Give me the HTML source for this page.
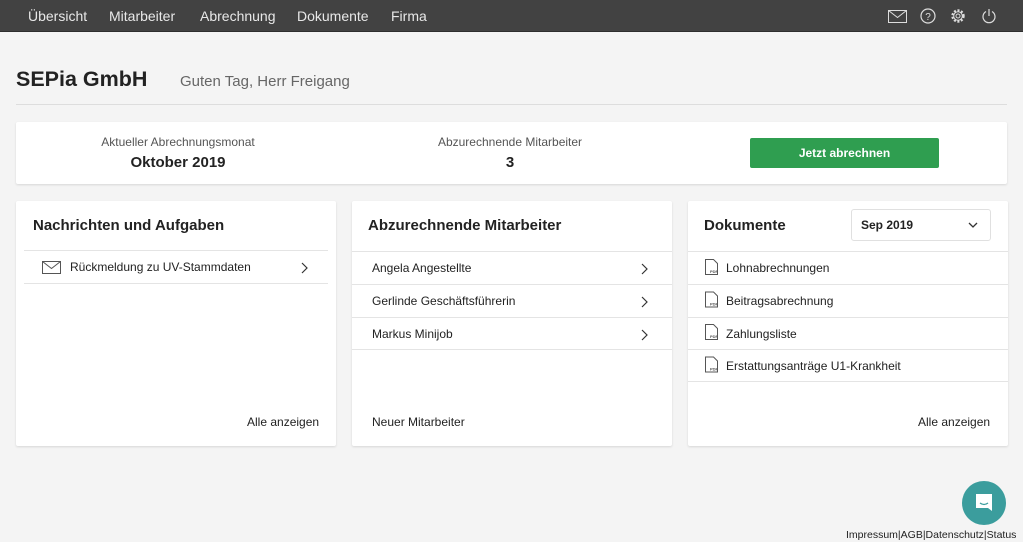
<!DOCTYPE html>
<html><head><meta charset="utf-8"><style>
*{box-sizing:border-box;margin:0;padding:0}
body{width:1023px;height:542px;background:#f4f4f4;font-family:"Liberation Sans",sans-serif;color:#222;position:relative;overflow:hidden}
.nav{position:absolute;left:0;top:0;width:1023px;height:32px;background:#424242;border-bottom:1px solid #2e2e2e}
.nav span{position:absolute;top:8px;color:#e8e8e8;font-size:14px}
.ic{position:absolute;top:8px}
.h1{position:absolute;left:16px;top:67px;font-size:21.5px;font-weight:bold;color:#222}
.greet{position:absolute;left:180px;top:73px;font-size:15px;color:#666}
.hr{position:absolute;left:16px;top:104px;width:991px;height:1px;background:#ddd}
.card{position:absolute;background:#fff;box-shadow:0 1px 2px rgba(0,0,0,.12);border-radius:2px}
.lbl{position:absolute;font-size:12px;color:#555;text-align:center}
.val{position:absolute;font-size:15px;font-weight:bold;text-align:center}
.btn{position:absolute;left:750px;top:138px;width:189px;height:30px;background:#2f9e50;border-radius:2px;color:#fff;font-size:12px;font-weight:bold;text-align:center;line-height:30px}
.t{position:absolute;top:217px;font-size:15px;font-weight:bold;color:#222}
.row{position:absolute;height:33px;border-top:1px solid #e4e4e4;font-size:12px;line-height:32px;color:#222}
.ch{position:absolute;right:24px;top:11px}
.foot{position:absolute;top:415px;font-size:12px;color:#222}
svg{display:block}
</style></head><body>
<div class="nav">
<span style="left:28px">Übersicht</span><span style="left:109px">Mitarbeiter</span><span style="left:200px">Abrechnung</span><span style="left:297px">Dokumente</span><span style="left:391px">Firma</span>
<svg class="ic" style="left:888px;top:10px" width="19" height="13" viewBox="0 0 19 13"><rect x=".5" y=".5" width="18" height="12" fill="none" stroke="#ddd"/><path d="M.5 .5l9 7 9-7" fill="none" stroke="#ddd"/></svg>
<svg class="ic" style="left:920px" width="16" height="16" viewBox="0 0 16 16"><circle cx="8" cy="8" r="7" fill="none" stroke="#ddd" stroke-width="1.2"/><text x="8" y="12" font-size="10" fill="#ddd" text-anchor="middle" font-family="Liberation Sans">?</text></svg>
<svg class="ic" style="left:950px" width="16" height="16" viewBox="0 0 16 16"><circle cx="8" cy="8" r="5.5" fill="none" stroke="#ddd" stroke-width="2.4" stroke-dasharray="2 1.6"/><circle cx="8" cy="8" r="4.3" fill="none" stroke="#ddd" stroke-width="1"/><circle cx="8" cy="8" r="2" fill="none" stroke="#ddd"/></svg>
<svg class="ic" style="left:981px" width="16" height="16" viewBox="0 0 16 16"><path d="M5 3.5A6 6 0 1 0 11 3.5" fill="none" stroke="#ddd" stroke-width="1.2"/><path d="M8 1v7" stroke="#ddd" stroke-width="1.2"/></svg>
</div>
<div class="h1">SEPia GmbH</div>
<div class="greet">Guten Tag, Herr Freigang</div>
<div class="hr"></div>

<div class="card" style="left:16px;top:122px;width:991px;height:62px"></div>
<div class="lbl" style="left:78px;top:135px;width:200px">Aktueller Abrechnungsmonat</div>
<div class="val" style="left:78px;top:154px;width:200px">Oktober 2019</div>
<div class="lbl" style="left:410px;top:135px;width:200px">Abzurechnende Mitarbeiter</div>
<div class="val" style="left:410px;top:154px;width:200px">3</div>
<div class="btn">Jetzt abrechnen</div>

<div class="card" style="left:16px;top:201px;width:320px;height:245px"></div>
<div class="card" style="left:352px;top:201px;width:320px;height:245px"></div>
<div class="card" style="left:688px;top:201px;width:320px;height:245px"></div>

<div class="t" style="left:33px">Nachrichten und Aufgaben</div>
<div class="row" style="left:24px;top:250px;width:304px;border-bottom:1px solid #e4e4e4;height:34px">
<svg style="position:absolute;left:18px;top:10px" width="19" height="13" viewBox="0 0 19 13"><rect x=".5" y=".5" width="18" height="12" fill="none" stroke="#555"/><path d="M.5 .5l9 7 9-7" fill="none" stroke="#555"/></svg>
<span style="position:absolute;left:46px">Rückmeldung zu UV-Stammdaten</span><svg class="ch" style="right:20px" width="7" height="12" viewBox="0 0 7 12"><path d="M1 1l5 5-5 5" fill="none" stroke="#333" stroke-width="1.2"/></svg></div>
<div class="foot" style="left:247px">Alle anzeigen</div>

<div class="t" style="left:368px">Abzurechnende Mitarbeiter</div>
<div class="row" style="left:352px;top:251px;width:320px;padding-left:20px">Angela Angestellte<svg class="ch" width="7" height="12" viewBox="0 0 7 12"><path d="M1 1l5 5-5 5" fill="none" stroke="#333" stroke-width="1.2"/></svg></div>
<div class="row" style="left:352px;top:284px;width:320px;padding-left:20px">Gerlinde Geschäftsführerin<svg class="ch" width="7" height="12" viewBox="0 0 7 12"><path d="M1 1l5 5-5 5" fill="none" stroke="#333" stroke-width="1.2"/></svg></div>
<div class="row" style="left:352px;top:317px;width:320px;padding-left:20px;border-bottom:1px solid #e4e4e4">Markus Minijob<svg class="ch" width="7" height="12" viewBox="0 0 7 12"><path d="M1 1l5 5-5 5" fill="none" stroke="#333" stroke-width="1.2"/></svg></div>
<div class="foot" style="left:372px">Neuer Mitarbeiter</div>

<div class="t" style="left:704px">Dokumente</div>
<div style="position:absolute;left:851px;top:209px;width:140px;height:32px;border:1px solid #e0e0e0;border-radius:3px;background:#fff;font-size:12px;font-weight:bold;line-height:30px;padding-left:9px">Sep 2019<svg style="position:absolute;right:12px;top:12px" width="10" height="6" viewBox="0 0 10 6"><path d="M1 1l4 4 4-4" fill="none" stroke="#333" stroke-width="1.3"/></svg></div>
<div class="row" style="left:688px;top:251px;width:320px;padding-left:38px">Lohnabrechnungen</div>
<div class="row" style="left:688px;top:284px;width:320px;padding-left:38px">Beitragsabrechnung</div>
<div class="row" style="left:688px;top:317px;width:320px;padding-left:38px">Zahlungsliste</div>
<div class="row" style="left:688px;top:349px;width:320px;padding-left:38px;border-bottom:1px solid #e4e4e4">Erstattungsanträge U1-Krankheit</div>
<svg style="position:absolute;left:704px;top:259px" width="16" height="120" viewBox="0 0 16 120">
<g fill="none" stroke="#555" stroke-width="1"><path d="M1.5 .5h8l4 4v11h-12z"/><path d="M1.5 33h8l4 4v11h-12z"/><path d="M1.5 65.5h8l4 4v11h-12z"/><path d="M1.5 98h8l4 4v11h-12z"/></g>
<g font-size="4" font-family="Liberation Sans" font-weight="bold" fill="#555"><text x="6" y="14">PDF</text><text x="6" y="46.5">PDF</text><text x="6" y="79">PDF</text><text x="6" y="111.5">PDF</text></g>
</svg>
<div class="foot" style="left:918px">Alle anzeigen</div>

<div style="position:absolute;left:962px;top:481px;width:44px;height:44px;border-radius:50%;background:#3b9d9d"></div>
<svg style="position:absolute;left:973px;top:492px" width="22" height="22" viewBox="0 0 22 22"><path d="M3 2h16v17l-4-3H3z" fill="#fff"/><path d="M7 11q4 3 8 0" fill="none" stroke="#3b9d9d" stroke-width="1.3"/></svg>
<div style="position:absolute;left:846px;top:529px;font-size:10.5px;color:#222">Impressum|AGB|Datenschutz|Status</div>
</body></html>
